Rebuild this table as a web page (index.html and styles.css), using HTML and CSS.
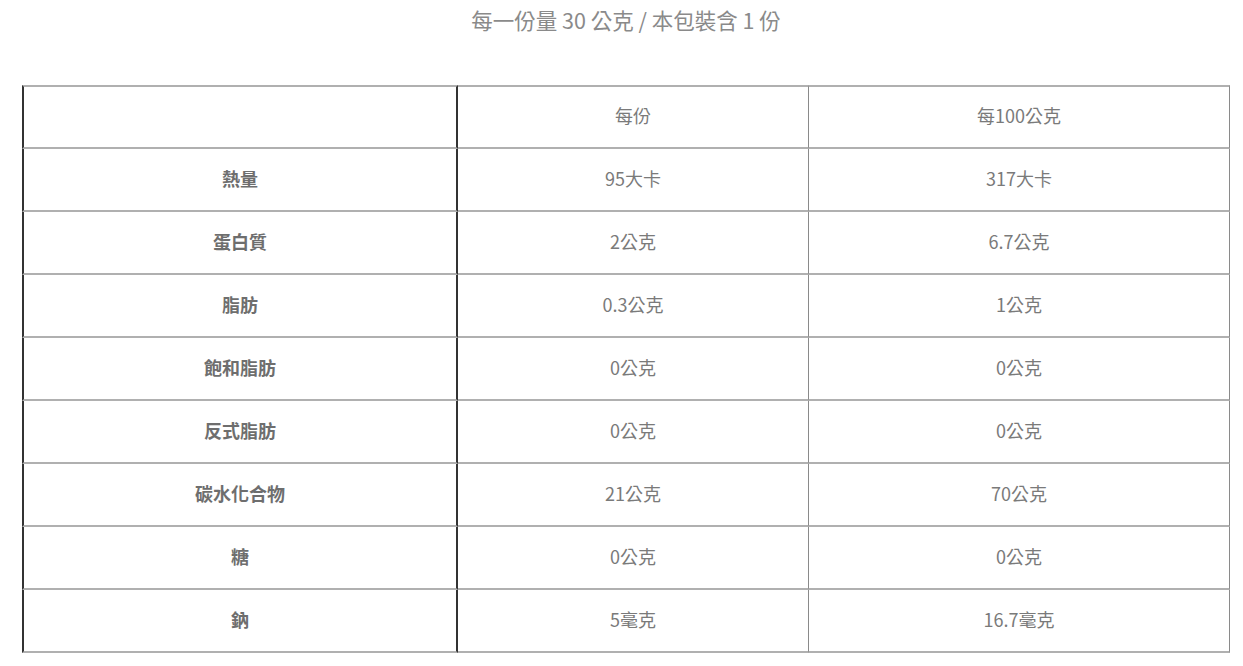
FILE: index.html
```html
<!DOCTYPE html>
<html lang="zh-Hant">
<head>
<meta charset="utf-8">
<link rel="stylesheet" href="styles.css">
</head>
<body>
<div class="page">
  <p class="title">每一份量 30 公克 / 本包裝含 1 份</p>
  <table class="nutrition">
    <colgroup>
      <col class="c1"><col class="c2"><col class="c3">
    </colgroup>
    <tr class="head"><td class="label"></td><td>每份</td><td>每100公克</td></tr>
    <tr><td class="label">熱量</td><td>95大卡</td><td>317大卡</td></tr>
    <tr><td class="label">蛋白質</td><td>2公克</td><td>6.7公克</td></tr>
    <tr><td class="label">脂肪</td><td>0.3公克</td><td>1公克</td></tr>
    <tr><td class="label">飽和脂肪</td><td>0公克</td><td>0公克</td></tr>
    <tr><td class="label">反式脂肪</td><td>0公克</td><td>0公克</td></tr>
    <tr><td class="label">碳水化合物</td><td>21公克</td><td>70公克</td></tr>
    <tr><td class="label">糖</td><td>0公克</td><td>0公克</td></tr>
    <tr><td class="label">鈉</td><td>5毫克</td><td>16.7毫克</td></tr>
  </table>
</div>
</body>
</html>
```

FILE: styles.css
```css
html, body {
  margin: 0;
  padding: 0;
  background: #fff;
}
.page {
  padding: 0 0 0 22px;
  font-family: "Noto Sans CJK TC", "Noto Sans", sans-serif;
}
.title {
  margin: 0;
  height: 85px;
  padding-top: 5px;
  box-sizing: border-box;
  text-align: center;
  font-size: 21.5px;
  line-height: 30px;
  color: #8a8a8a;
  width: 1208px;
}
.nutrition {
  border-collapse: separate;
  border-spacing: 0;
  table-layout: fixed;
  width: 1208px;
}
.c1 { width: 436px; }
.c2 { width: 351px; }
.c3 { width: 421px; }
.nutrition td {
  padding: 0 0 4px;
  text-align: center;
  vertical-align: middle;
  font-size: 18px;
  color: #7a7a7a;
  border-bottom: 2px solid #b0b0b0;
  box-sizing: border-box;
  height: 63px;
}
.nutrition .head td {
  border-top: 2px solid #b0b0b0;
  height: 64px;
}
.nutrition td:nth-child(1) {
  border-left: 2px solid #333;
  border-right: 2px solid #333;
}
.nutrition td:nth-child(2),
.nutrition td:nth-child(3) {
  border-right: 1px solid #8a8a8a;
}
.nutrition td.label {
  font-weight: 700;
  color: #6e6e6e;
}
```
